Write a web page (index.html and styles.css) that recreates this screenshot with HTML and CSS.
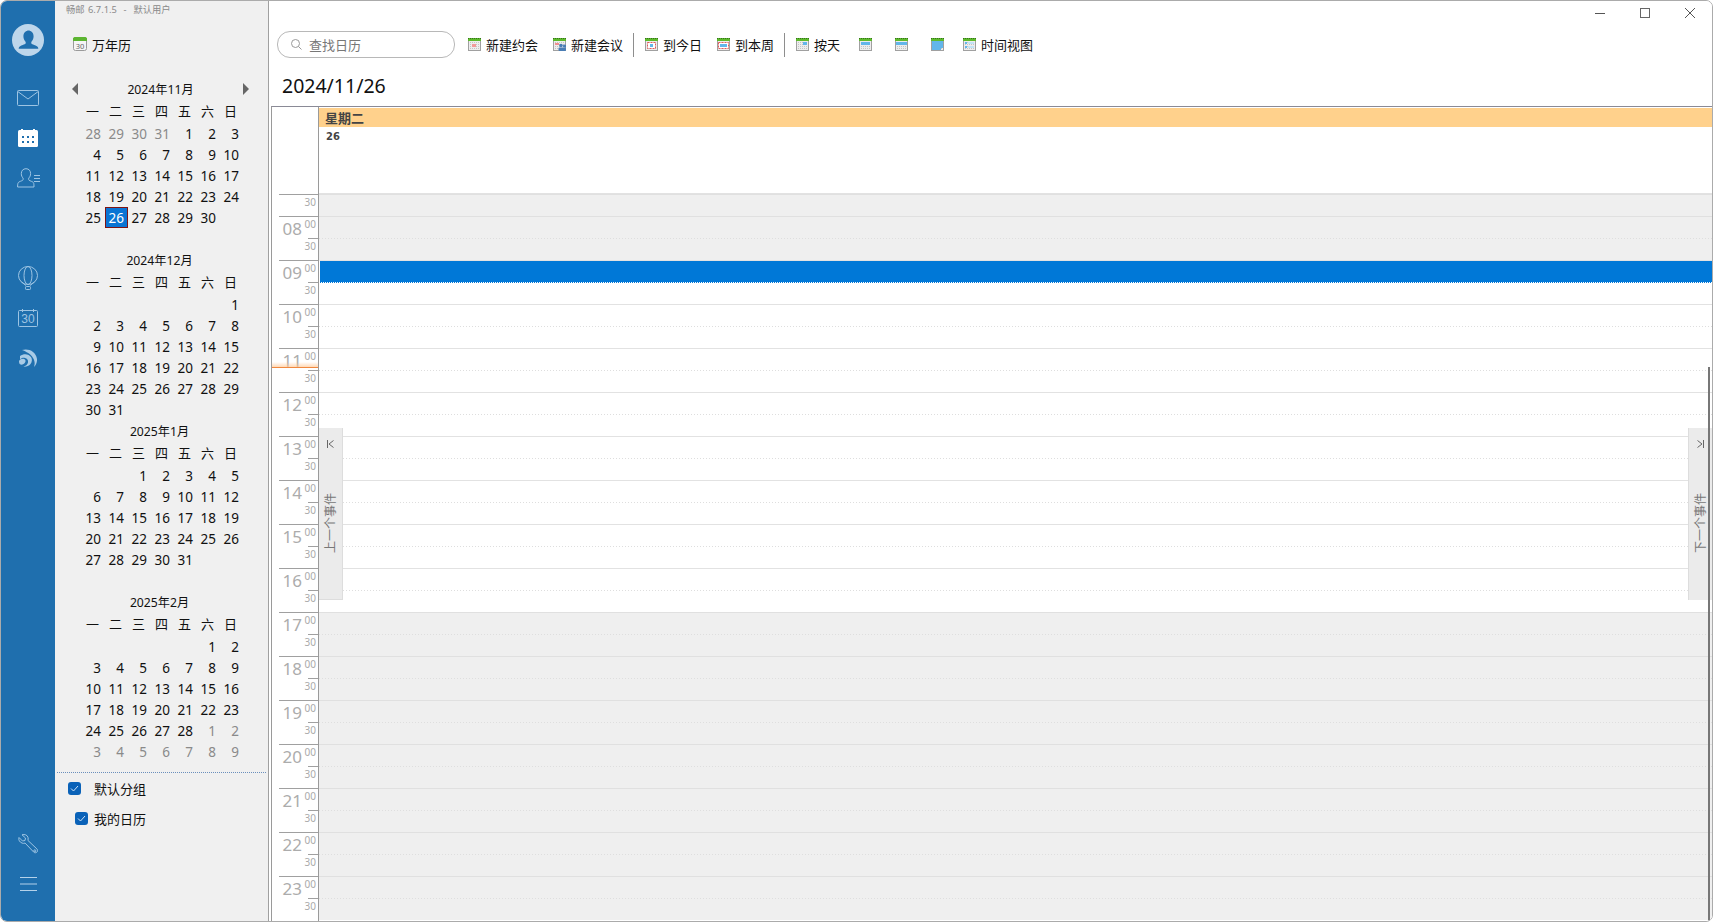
FILE: index.html
```html
<!DOCTYPE html>
<html lang="zh">
<head>
<meta charset="utf-8">
<title>畅邮 万年历</title>
<link rel="stylesheet" href="styles.css">
</head>
<body>
<svg class="defs" width="0" height="0">
  <defs>
    <pattern id="dots" width="2" height="2" patternUnits="userSpaceOnUse"><rect width="2" height="2" fill="#ededed"/><rect width="1" height="1" fill="#c4c4c4"/></pattern>
    <symbol id="calbase" viewBox="0 0 13 13">
      <rect x=".5" y=".5" width="12" height="12" fill="url(#dots)" stroke="#a0a0a0"/>
      <rect x="0" y="0" width="13" height="3" fill="#5dba2c"/>
      <path d="M0 .5h13" stroke="#35701c" stroke-dasharray="1 1"/>
    </symbol>
  </defs>
</svg>
<div class="window">
  <nav class="rail">
    <div class="avatar-slot">
      <svg width="32" height="32" viewBox="0 0 32 32"><circle cx="16" cy="16" r="16" fill="#bdd6eb"/><path d="M16 6.5c3.6 0 5.6 2.6 5.6 5.8 0 2.4-1 4.4-2.3 5.6v1.4c0 1 3.3 1.6 5.6 2.9 1 .6 1.4 1.4 1.4 2.6H6.700c0-1.200.4-2 1.400-2.600 2.300-1.300 5.600-1.900 5.600-2.900v-1.400c-1.300-1.200-2.300-3.200-2.300-5.600 0-3.200 2-5.800 5.600-5.800z" fill="#1f6fae"/></svg>
    </div>
    <div class="rail-group">
      <div class="rail-slot"><svg width="22" height="16" viewBox="0 0 22 16" fill="none" stroke="#9dc4e3"><rect x=".5" y=".5" width="21" height="15" rx="1"/><path d="M.8 1.500 11 9l10.200-7.500"/></svg></div>
      <div class="rail-slot"><svg width="20" height="18" viewBox="0 0 20 18"><rect y="1" width="20" height="17" rx="1.500" fill="#fff"/><path d="M4 0v3M16 0v3" stroke="#fff" stroke-width="2"/><path d="M4 7h2v2H4zM9 7h2v2H9zM14 7h2v2h-2zM4 12h2v2H4zM9 12h2v2H9zM14 12h2v2h-2z" fill="#1f6fae"/></svg></div>
      <div class="rail-slot"><svg width="23" height="20" viewBox="0 0 23 20" fill="none" stroke="#9dc4e3"><path d="M9 .7c3 0 4.600 2.200 4.600 4.900 0 1.900-.8 3.500-1.900 4.500v1.500c0 1 2.300 1.400 3.900 2.300 1.200.7 1.400 1.700 1.400 5.100H.6c0-3.400.3-4.400 1.500-5.100 1.600-.9 4-1.300 4-2.300v-1.500C5 9.100 4.300 7.500 4.300 5.600 4.300 2.900 6 .7 9 .7z"/><path d="M17 7.500h6M17 10.500h6M17 13.500h6"/></svg></div>
    </div>
    <div class="rail-group rail-group-tools">
      <div class="rail-slot"><svg width="20" height="24" viewBox="0 0 20 24" fill="none" stroke="#9dc4e3"><ellipse cx="10" cy="9.500" rx="9.500" ry="9"/><ellipse cx="10" cy="9.500" rx="4" ry="9"/><path d="M3.500 16 8 19.500M16.500 16 12 19.500"/><rect x="7.500" y="20.500" width="5" height="3" rx=".8"/></svg></div>
      <div class="rail-slot"><svg width="20" height="18" viewBox="0 0 20 18" fill="none" stroke="#9dc4e3"><rect x=".5" y="1.500" width="19" height="16" rx="1"/><path d="M4.500 0v3M15.500 0v3"/><text x="10" y="14" class="cal-num">30</text></svg></div>
      <div class="rail-slot"><svg width="18" height="18" viewBox="0 0 18 18" fill="#a9cbe6"><path d="M3 1c6-2 14 1 15 9 .3 3-1 6-3 8 1-3 1-6-1-9C12 5 7 2.500 3 1z"/><path d="M1 7c4-3 9-2 11 1 1.500 2.300 1 5-.5 7-1.500 2-4.500 3-7 2.700 2-.7 4-2 4.500-4.200.5-2.500-1-4-3-4.500C4 8.500 2.500 9 1 10.500V7z"/><path d="M0 12c1-1.500 3-2.500 5-2 1.500.4 2 2 1.200 3.300C5.400 15 3 16 1.500 15.500.3 15 0 13.500 0 12z"/></svg></div>
    </div>
    <div class="rail-group rail-group-bottom">
      <div class="rail-slot"><svg width="20" height="20" viewBox="0 0 20 20" fill="none" stroke="#9dc4e3"><path d="M1 3.500 4.500 7l2.500-.5L7.500 4 4 .8c2.700-.8 5.300.1 6 2.700.3 1.100.2 2-.1 2.900l9 8.500c.9 1 .9 2.300 0 3.200s-2.300.9-3.200 0l-8.600-9c-1 .3-2 .4-3 0C1.500 8 .3 6 1 3.500z"/><circle cx="16.800" cy="16.800" r="1"/></svg></div>
      <div class="rail-slot"><svg width="17" height="14" viewBox="0 0 17 14" stroke="#b4d2ea"><path d="M0 .5h17M0 7h17M0 13.500h17"/></svg></div>
    </div>
  </nav>

  <aside class="panel">
    <div class="brand">畅邮 6.7.1.5  -  默认用户</div>
    <div class="panel-title">
      <svg width="14" height="14" viewBox="0 0 14 14"><rect x=".5" y=".5" width="13" height="13" rx="2" fill="#f5f5f5" stroke="#9a9a9a"/><path d="M0 2.500a2 2 0 0 1 2-2.500h10a2 2 0 0 1 2 2.500V4H0z" fill="#5cb531"/><text x="7" y="12" class="mini-num">30</text></svg>
      <span>万年历</span>
    </div>

    <section class="month">
      <div class="month-head">
        <span class="arrow arrow-left"></span>
        <span>2024年11月</span>
        <span class="arrow arrow-right"></span>
      </div>
      <div class="weekdays"><span>一</span><span>二</span><span>三</span><span>四</span><span>五</span><span>六</span><span>日</span></div>
      <div class="days">
        <span class="o">28</span><span class="o">29</span><span class="o">30</span><span class="o">31</span><span>1</span><span>2</span><span>3</span>
        <span>4</span><span>5</span><span>6</span><span>7</span><span>8</span><span>9</span><span>10</span>
        <span>11</span><span>12</span><span>13</span><span>14</span><span>15</span><span>16</span><span>17</span>
        <span>18</span><span>19</span><span>20</span><span>21</span><span>22</span><span>23</span><span>24</span>
        <span>25</span><span class="today">26</span><span>27</span><span>28</span><span>29</span><span>30</span>
      </div>
    </section>

    <section class="month">
      <div class="month-head month-head-plain"><span>2024年12月</span></div>
      <div class="weekdays"><span>一</span><span>二</span><span>三</span><span>四</span><span>五</span><span>六</span><span>日</span></div>
      <div class="days">
        <span></span><span></span><span></span><span></span><span></span><span></span><span>1</span>
        <span>2</span><span>3</span><span>4</span><span>5</span><span>6</span><span>7</span><span>8</span>
        <span>9</span><span>10</span><span>11</span><span>12</span><span>13</span><span>14</span><span>15</span>
        <span>16</span><span>17</span><span>18</span><span>19</span><span>20</span><span>21</span><span>22</span>
        <span>23</span><span>24</span><span>25</span><span>26</span><span>27</span><span>28</span><span>29</span>
        <span>30</span><span>31</span>
      </div>
    </section>

    <section class="month">
      <div class="month-head month-head-plain"><span>2025年1月</span></div>
      <div class="weekdays"><span>一</span><span>二</span><span>三</span><span>四</span><span>五</span><span>六</span><span>日</span></div>
      <div class="days">
        <span></span><span></span><span>1</span><span>2</span><span>3</span><span>4</span><span>5</span>
        <span>6</span><span>7</span><span>8</span><span>9</span><span>10</span><span>11</span><span>12</span>
        <span>13</span><span>14</span><span>15</span><span>16</span><span>17</span><span>18</span><span>19</span>
        <span>20</span><span>21</span><span>22</span><span>23</span><span>24</span><span>25</span><span>26</span>
        <span>27</span><span>28</span><span>29</span><span>30</span><span>31</span>
      </div>
    </section>

    <section class="month">
      <div class="month-head month-head-plain"><span>2025年2月</span></div>
      <div class="weekdays"><span>一</span><span>二</span><span>三</span><span>四</span><span>五</span><span>六</span><span>日</span></div>
      <div class="days">
        <span></span><span></span><span></span><span></span><span></span><span>1</span><span>2</span>
        <span>3</span><span>4</span><span>5</span><span>6</span><span>7</span><span>8</span><span>9</span>
        <span>10</span><span>11</span><span>12</span><span>13</span><span>14</span><span>15</span><span>16</span>
        <span>17</span><span>18</span><span>19</span><span>20</span><span>21</span><span>22</span><span>23</span>
        <span>24</span><span>25</span><span>26</span><span>27</span><span>28</span><span class="o">1</span><span class="o">2</span>
        <span class="o">3</span><span class="o">4</span><span class="o">5</span><span class="o">6</span><span class="o">7</span><span class="o">8</span><span class="o">9</span>
      </div>
    </section>

    <div class="groups">
      <label class="group-row"><span class="check"><svg width="9" height="7" viewBox="0 0 9 7" fill="none" stroke="#cfe3f7"><path d="M1 3.500 3.500 6 8 1"/></svg></span><span>默认分组</span></label>
      <label class="group-row group-row-child"><span class="check"><svg width="9" height="7" viewBox="0 0 9 7" fill="none" stroke="#cfe3f7"><path d="M1 3.500 3.500 6 8 1"/></svg></span><span>我的日历</span></label>
    </div>
  </aside>

  <main class="main">
    <div class="titlebar">
      <div class="ctl"><svg width="10" height="10" viewBox="0 0 10 10" stroke="#555"><path d="M0 5.500h10"/></svg></div>
      <div class="ctl"><svg width="10" height="10" viewBox="0 0 10 10" fill="none" stroke="#666"><rect x=".5" y=".5" width="9" height="9"/></svg></div>
      <div class="ctl"><svg width="10" height="10" viewBox="0 0 10 10" stroke="#555"><path d="M0 0l10 10M10 0L0 10"/></svg></div>
    </div>

    <div class="toolbar">
      <div class="search">
        <svg width="11" height="11" viewBox="0 0 11 11" fill="none" stroke="#999"><circle cx="4.500" cy="4.500" r="4"/><path d="M7.500 7.500 10.500 10.500"/></svg>
        <span>查找日历</span>
      </div>
      <div class="tb">
        <svg class="tbi" viewBox="0 0 13 13"><use href="#calbase"/><rect x="4" y="6" width="4" height="3" fill="#f29a9a"/></svg>
        <span>新建约会</span>
      </div>
      <div class="tb">
        <svg class="tbi" viewBox="0 0 13 13"><use href="#calbase"/><rect x="2" y="5" width="4" height="2" fill="#ef8f8f"/><circle cx="8" cy="7.500" r="1.800" fill="#4a7db5"/><circle cx="11.500" cy="8" r="1.600" fill="#4a7db5"/><rect x="5.500" y="9.500" width="7.500" height="3.500" rx="1" fill="#4a7db5"/></svg>
        <span>新建会议</span>
      </div>
      <div class="tb-sep"></div>
      <div class="tb">
        <svg class="tbi" viewBox="0 0 13 13"><use href="#calbase"/><rect x="2.500" y="4.500" width="8" height="6" fill="#fff" stroke="#e05a5a" stroke-dasharray="2 1"/><rect x="5" y="6" width="3" height="3" fill="#62b6ea"/></svg>
        <span>到今日</span>
      </div>
      <div class="tb">
        <svg class="tbi" viewBox="0 0 13 13"><use href="#calbase"/><rect x="1.500" y="4.500" width="10" height="6" fill="#fff" stroke="#e05a5a" stroke-dasharray="2 1"/><rect x="3" y="6" width="7" height="3" fill="#62b6ea"/></svg>
        <span>到本周</span>
      </div>
      <div class="tb-sep"></div>
      <div class="tb">
        <svg class="tbi" viewBox="0 0 13 13"><use href="#calbase"/><rect x="7" y="4" width="4" height="3" fill="#62b6ea"/></svg>
        <span>按天</span>
      </div>
      <div class="tb tb-icon"><svg class="tbi" viewBox="0 0 13 13"><use href="#calbase"/><rect x="2" y="4" width="9" height="3" fill="#62b6ea"/></svg></div>
      <div class="tb tb-icon"><svg class="tbi" viewBox="0 0 13 13"><use href="#calbase"/><rect x="1" y="4" width="11" height="3" fill="#62b6ea"/></svg></div>
      <div class="tb tb-icon"><svg class="tbi" viewBox="0 0 13 13"><use href="#calbase"/><path d="M1 3h11v7h-2v2H1z" fill="#62b6ea"/></svg></div>
      <div class="tb">
        <svg class="tbi" viewBox="0 0 13 13"><use href="#calbase"/><rect x="2" y="4" width="2" height="2" fill="#62b6ea"/><rect x="5" y="4" width="6" height="2" fill="#c2e3f6"/><rect x="2" y="8" width="2" height="2" fill="#62b6ea"/><rect x="5" y="8" width="6" height="2" fill="#c2e3f6"/></svg>
        <span>时间视图</span>
      </div>
    </div>

    <h1 class="date-title">2024/11/26</h1>

    <div class="sched">
      <div class="sched-head">
        <div class="gutter-head"></div>
        <div class="day-head">
          <div class="day-name">星期二</div>
          <div class="day-num">26</div>
        </div>
      </div>
      <div class="sched-body">
        <div class="times">
          <div class="t-first">30</div>
          <div class="hr"><b>08</b><i>00</i><u>30</u></div>
          <div class="hr"><b>09</b><i>00</i><u>30</u></div>
          <div class="hr"><b>10</b><i>00</i><u>30</u></div>
          <div class="hr"><b>11</b><i>00</i><u>30</u></div>
          <div class="hr"><b>12</b><i>00</i><u>30</u></div>
          <div class="hr"><b>13</b><i>00</i><u>30</u></div>
          <div class="hr"><b>14</b><i>00</i><u>30</u></div>
          <div class="hr"><b>15</b><i>00</i><u>30</u></div>
          <div class="hr"><b>16</b><i>00</i><u>30</u></div>
          <div class="hr"><b>17</b><i>00</i><u>30</u></div>
          <div class="hr"><b>18</b><i>00</i><u>30</u></div>
          <div class="hr"><b>19</b><i>00</i><u>30</u></div>
          <div class="hr"><b>20</b><i>00</i><u>30</u></div>
          <div class="hr"><b>21</b><i>00</i><u>30</u></div>
          <div class="hr"><b>22</b><i>00</i><u>30</u></div>
          <div class="hr"><b>23</b><i>00</i><u>30</u></div>
        </div>
        <div class="slots">
          <div class="s off h"></div>
          <div class="s off h"></div><div class="s off"></div>
          <div class="s sel"></div><div class="s after-sel"></div>
          <div class="s h"></div><div class="s"></div>
          <div class="s h"></div><div class="s"></div>
          <div class="s h"></div><div class="s"></div>
          <div class="s h"></div><div class="s"></div>
          <div class="s h"></div><div class="s"></div>
          <div class="s h"></div><div class="s"></div>
          <div class="s h"></div><div class="s"></div>
          <div class="s off h"></div><div class="s off"></div>
          <div class="s off h"></div><div class="s off"></div>
          <div class="s off h"></div><div class="s off"></div>
          <div class="s off h"></div><div class="s off"></div>
          <div class="s off h"></div><div class="s off"></div>
          <div class="s off h"></div><div class="s off"></div>
          <div class="s off h"></div><div class="s off"></div>
        </div>
        <div class="now-line"></div>
        <div class="jump jump-prev">
          <svg width="7" height="8" viewBox="0 0 7 8" fill="none" stroke="#666"><path d="M.5 0v8M6.500 .5 2 4l4.500 3.500"/></svg>
          <span class="jump-text">上一个事件</span>
        </div>
        <div class="jump jump-next">
          <svg width="7" height="8" viewBox="0 0 7 8" fill="none" stroke="#666"><path d="M6.500 0v8M.5 .5 5 4 .5 7.500"/></svg>
          <span class="jump-text">下一个事件</span>
        </div>
        <div class="scroll-thumb"></div>
      </div>
    </div>
  </main>
</div>
</body>
</html>
```

FILE: styles.css
```css
* { box-sizing: border-box; }
html, body { margin: 0; padding: 0; height: 100%; overflow: hidden; background: #fff; }
body { font-family: "Noto Sans", "Noto Sans CJK SC", sans-serif; font-size: 13px; color: #111; }
.defs { position: absolute; }

.window {
  display: flex;
  width: 1713px;
  height: 922px;
  border: 1px solid #ababab;
  border-radius: 7px;
  overflow: hidden;
  background: #fff;
}

/* left rail */
.rail { width: 54px; flex: none; background: #1f6fae; display: flex; flex-direction: column; }
.avatar-slot { height: 60px; margin-top: 9px; display: flex; align-items: center; justify-content: center; }
.rail-group { margin-top: 8px; }
.rail-group-tools { margin-top: 60px; }
.rail-group-bottom { margin-top: auto; margin-bottom: 17px; }
.rail-slot { height: 40px; display: flex; align-items: center; justify-content: center; }
.cal-num { font: 12px "Liberation Sans", sans-serif; fill: #9dc4e3; stroke: none; text-anchor: middle; }
.mini-num { font: 7.500px "Noto Sans", sans-serif; fill: #666; text-anchor: middle; }

/* month panel */
.panel { width: 214px; flex: none; background: #f0f0f0; border-right: 1px solid #a0a0a0; }
.brand { font-size: 9.300px; word-spacing: 1px; line-height: 18px; height: 18px; color: #8a8a8a; padding-left: 11px; white-space: pre; }
.panel-title { display: flex; align-items: center; gap: 5px; height: 20px; margin: 15px 0 24px 18px; color: #111; }
.month { width: 161px; height: 171px; margin-left: 27px; }
.month-head { display: flex; justify-content: space-between; align-items: center; width: 175px; height: 22px; margin-left: -10px; font-size: 12.200px; position: relative; }
.month-head-plain { justify-content: center; }
.arrow { width: 0; height: 0; border-top: 6px solid transparent; border-bottom: 6px solid transparent; }
.arrow-left { border-right: 6px solid #666; }
.arrow-right { border-left: 6px solid #666; margin-right: -2px; }
.weekdays { display: grid; grid-template-columns: repeat(7, 23px); height: 23px; line-height: 22px; text-align: center; }
.weekdays span { padding-right: 2px; }
.days { display: grid; grid-template-columns: repeat(7, 23px); grid-auto-rows: 21px; line-height: 22px; text-align: right; font-size: 13.500px; }
.days span { padding-right: 4px; }
.days .o { color: #8a8a8a; }
.days .today { background: #0a74d4; color: #fff; border: 1px solid #7d1414; line-height: 20px; padding-right: 3px; }

.groups { margin: 10px 2px 0; border-top: 1px dotted #6a8fbc; }
.group-row { display: flex; align-items: center; height: 30px; padding-left: 11px; gap: 13px; }
.group-row-child { padding-left: 18px; gap: 6px; }
.check { width: 13px; height: 13px; border-radius: 3px; background: #0a62b8; display: flex; align-items: center; justify-content: center; }

/* main */
.main { flex: 1; min-width: 0; background: #fff; display: flex; flex-direction: column; }
.titlebar { height: 30px; display: flex; justify-content: flex-end; flex: none; }
.ctl { width: 45px; height: 24px; display: flex; align-items: center; justify-content: center; }

.toolbar { display: flex; align-items: center; height: 27px; padding-left: 8px; flex: none; }
.search {
  display: flex; align-items: center; gap: 7px;
  width: 178px; height: 27px; margin-right: 6px; padding-left: 13px;
  border: 1px solid #b8b8b8; border-radius: 13px; color: #777;
}
.tb { display: flex; align-items: center; gap: 5px; padding: 0 8px 0 7px; color: #111; }
.tb-icon { padding: 0 12px 0 11px; }
.tbi { width: 13px; height: 13px; display: block; }
.tb-sep { width: 1px; height: 24px; background: #8e8e8e; margin: 0 4px 0 2px; }

.date-title { margin: 14px 0 6px 13px; font-size: 19.500px; line-height: 28px; font-weight: 400; color: #111; flex: none; }

/* schedule */
.sched { flex: 1; min-height: 0; margin-left: 2px; border-left: 1px solid #9a9a9a; border-top: 1px solid #8a8a96; display: flex; flex-direction: column; }
.sched-head { display: flex; height: 87px; flex: none; }
.gutter-head { width: 47px; flex: none; border-right: 1px solid #9a9a9a; }
.day-head { flex: 1; border-bottom: 1px solid #e2e2e2; padding-top: 1px; }
.day-name { background: #ffd18c; height: 19px; line-height: 21px; padding-left: 6px; font-weight: 700; color: #444; }
.day-num { font: 700 10px/16px "DejaVu Sans", sans-serif; color: #444; padding: 2px 0 0 7px; }

.sched-body { flex: 1; min-height: 0; position: relative; display: flex; overflow: hidden; }
.times { width: 47px; flex: none; border-right: 1px solid #9a9a9a; color: #aaa; }
.t-first { height: 22px; margin-left: 7px; border-top: 1px solid #a0a0a0; font-size: 10px; line-height: 14px; text-align: right; padding-right: 2px; }
.hr {
  height: 44px; margin-left: 7px; border-top: 1px solid #a0a0a0;
  display: grid; grid-template-columns: 1fr 15px; grid-template-rows: 21px 22px;
}
.hr b { grid-row: 1 / 3; font-weight: 400; font-size: 17px; line-height: 24px; text-align: right; padding-right: 1px; color: #acacac; }
.hr i { font-style: normal; font-size: 10px; line-height: 15px; text-align: right; padding-right: 2px; }
.hr u {
  text-decoration: none; font-size: 10px; line-height: 16px; text-align: right; padding-right: 2px;
  background: linear-gradient(#a0a0a0, #a0a0a0) top right / 10px 1px no-repeat;
}

.slots { flex: 1; min-width: 0; }
.s {
  height: 22px;
  background-image: repeating-linear-gradient(90deg, #dedede 0 1px, transparent 1px 3px);
  background-size: 100% 1px;
  background-repeat: no-repeat;
}
.s.h { background-image: none; border-top: 1px solid #e2e2e2; }
.s.off { background-color: #efefef; }
.s.off.h { border-top-color: #e0e0e0; }
.s.sel { height: 23px; background-image: none; background-color: #0078d7; border-top: 1px solid #e2e2e2; border-left: 1px solid #fff; border-bottom: 1px dotted #fff; }
.s.after-sel { height: 21px; background-image: none; }

.now-line {
  position: absolute; left: 0; top: 168px; width: 46px; height: 6px;
  background: linear-gradient(rgba(255, 200, 150, 0), rgba(255, 200, 150, .7));
  border-bottom: 1px solid #f0883e;
}
.jump {
  position: absolute; top: 234px; width: 24px; height: 172px;
  background: #ebebeb; border: 1px solid #dddddd; color: #777;
  display: flex; flex-direction: column; align-items: center; padding-top: 12px;
}
.jump-prev { left: 47px; border-left: 0; border-top: 0; }
.jump-next { right: 0; border-right: 0; border-bottom: 0; border-top: 0; }
.jump-text { writing-mode: vertical-rl; text-orientation: sideways; transform: rotate(180deg); font-size: 12px; margin-top: 45px; line-height: 14px; }
.scroll-thumb { position: absolute; right: 2px; top: 173px; bottom: 0; width: 2px; background: #777; }
```
